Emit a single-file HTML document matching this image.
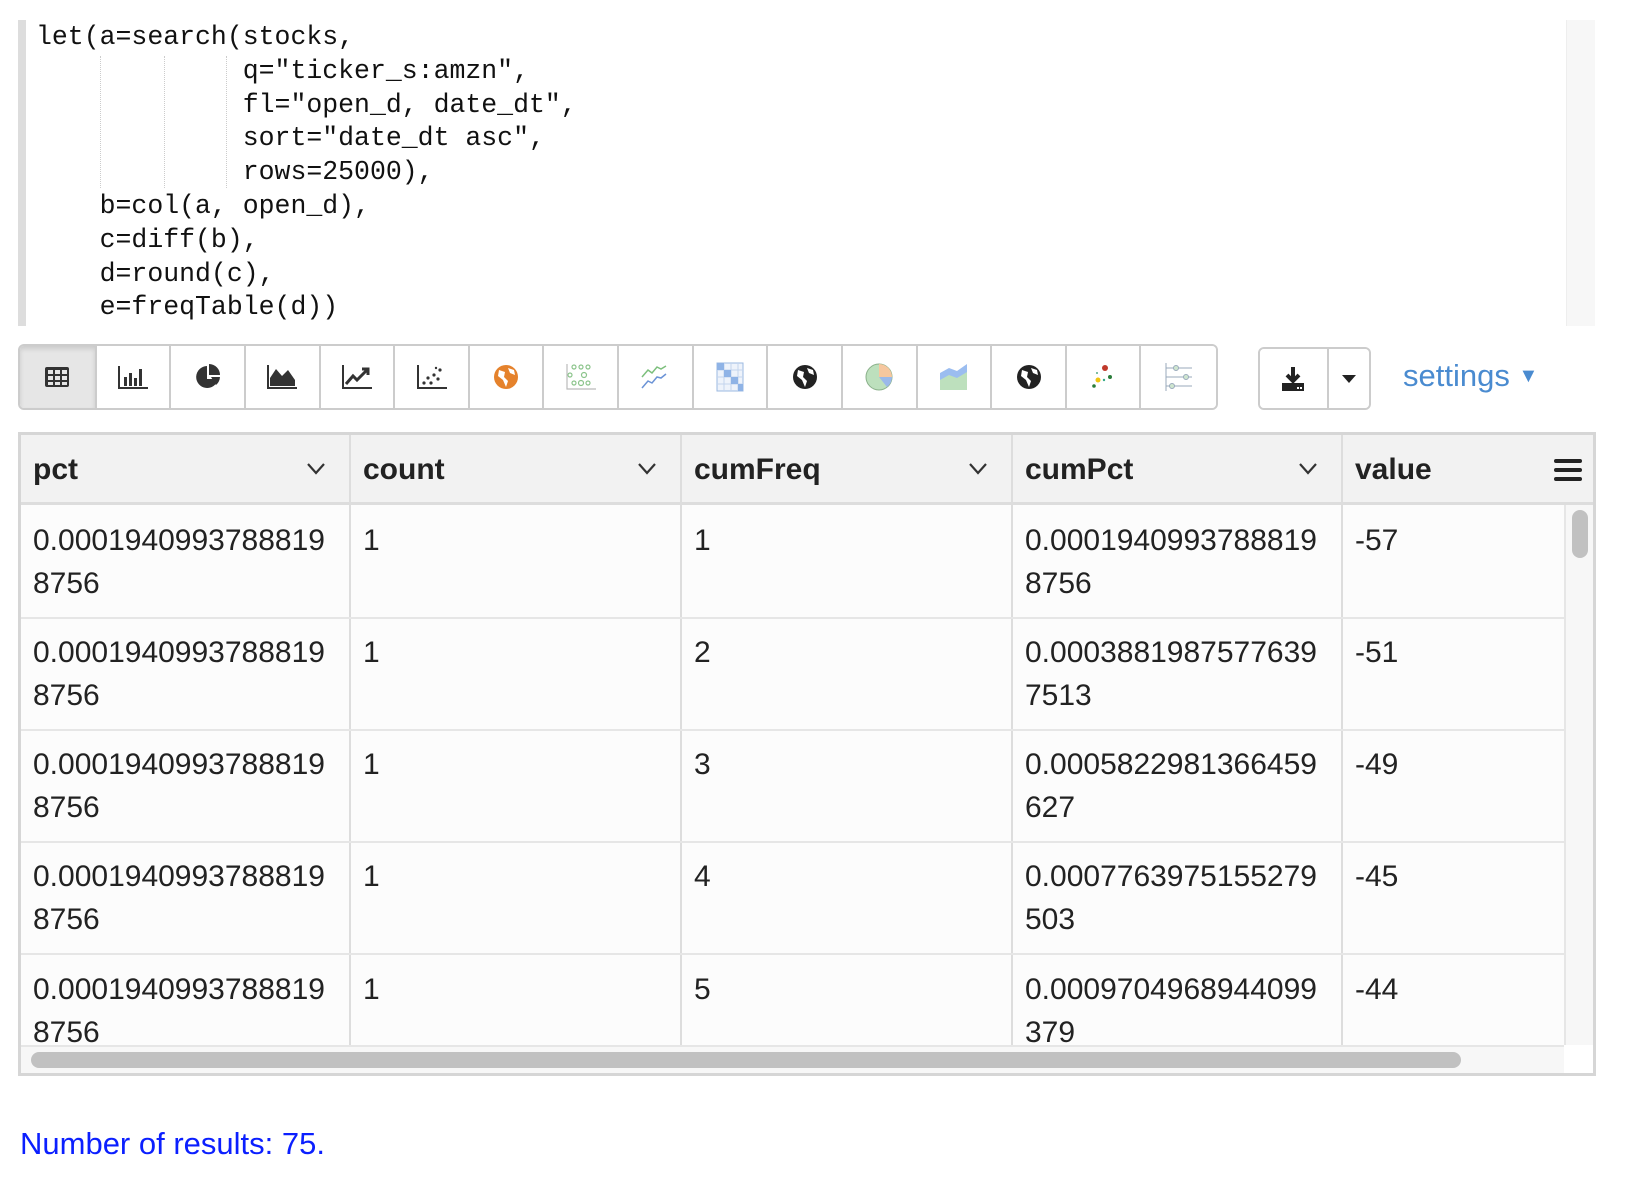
<!DOCTYPE html>
<html><head><meta charset="utf-8"><style>
*{box-sizing:border-box;margin:0;padding:0}
body{width:1626px;height:1184px;background:#fff;position:relative;overflow:hidden;font-family:"Liberation Sans",sans-serif;color:#222}
.code{position:absolute;left:18px;top:20px;width:1577px;height:306px;border-left:8px solid #ddd;background:#fff}
.code pre{position:absolute;left:10px;top:1px;font-family:"Liberation Mono","DejaVu Sans Mono",monospace;font-size:26.5px;line-height:33.8px;color:#111}
.vs{position:absolute;right:0;top:0;width:29px;height:306px;background:#f7f7f7;border-left:1px solid #eee}
.guide{position:absolute;top:36px;height:132px;border-left:1px dotted #ccc}
.tb{position:absolute;top:344px;height:66px;display:flex;border:2px solid #ccc;border-radius:6px;overflow:hidden}
.tb div{width:74.9px;height:100%;border-right:2px solid #ccc;display:flex;align-items:center;justify-content:center;background:#fff}
.tb div:last-child{border-right:none}
.tb div.act{background:#e6e6e6;width:77px;box-shadow:inset 0 3px 5px rgba(0,0,0,.12)}
.set{position:absolute;left:1403px;top:358px;font-size:31px;color:#4a8bd0}
.tbl{position:absolute;left:18px;top:432px;width:1578px;height:644px;border:3px solid #d6d6d6;overflow:hidden;background:#fcfcfc}
.hd{position:absolute;top:0;height:70px;background:#f2f2f2;border-bottom:3px solid #ddd;border-right:2px solid #ddd;font-weight:bold;font-size:30px;line-height:70px;padding-left:12px}
.hd svg.ch{position:absolute;right:24px;top:28px}
.col{position:absolute;top:70px;height:600px;border-right:2px solid #ddd}
.cell{position:absolute;font-size:30px;line-height:43px;padding-left:12px}
.rb{position:absolute;left:0;width:1544px;border-top:2px solid #e6e6e6}
</style></head><body>
<div class="code">
<div class="guide" style="left:74px"></div><div class="guide" style="left:138px"></div><div class="guide" style="left:200px"></div>
<pre>let(a=search(stocks,
             q="ticker_s:amzn",
             fl="open_d, date_dt",
             sort="date_dt asc",
             rows=25000),
    b=col(a, open_d),
    c=diff(b),
    d=round(c),
    e=freqTable(d))</pre>
<div class="vs"></div>
</div>

<div class="tb" style="left:18px;width:1200px">
<div class="act"><svg width="26" height="22" viewBox="0 0 26 22"><rect x="1" y="1" width="24" height="20" rx="2" fill="#333"/><g fill="#e6e6e6"><rect x="4" y="4" width="5" height="4"/><rect x="11" y="4" width="5" height="4"/><rect x="18" y="4" width="5" height="4"/><rect x="4" y="10" width="5" height="4"/><rect x="11" y="10" width="5" height="4"/><rect x="18" y="10" width="5" height="4"/><rect x="4" y="16" width="5" height="3"/><rect x="11" y="16" width="5" height="3"/><rect x="18" y="16" width="5" height="3"/></g></svg></div>
<div><svg width="32" height="24"><path d="M2 1V23H31" stroke="#333" stroke-width="2" fill="none"/><g fill="#333"><rect x="7" y="12" width="3" height="9"/><rect x="12" y="8" width="3" height="13"/><rect x="17" y="13" width="3" height="8"/><rect x="22" y="4" width="3" height="17"/></g></svg></div>
<div><svg width="28" height="28"><path d="M13 3A11 11 0 1 0 24 16H13Z" fill="#333"/><path d="M15 1A11 11 0 0 1 26 12H15Z" fill="#333"/><path d="M17 14H26A11 11 0 0 1 22 22Z" fill="#333"/></svg></div>
<div><svg width="32" height="26"><path d="M2 1V24H31" stroke="#333" stroke-width="2" fill="none"/><path d="M4 22L4 14L10 5L16 12L22 6L29 16V22Z" fill="#333"/></svg></div>
<div><svg width="32" height="26"><path d="M2 1V24H31" stroke="#333" stroke-width="2" fill="none"/><path d="M5 20L12 12L16 16L26 6M21 5H27V11" stroke="#333" stroke-width="3" fill="none"/></svg></div>
<div><svg width="32" height="26"><path d="M2 1V24H31" stroke="#333" stroke-width="2" fill="none"/><g fill="#333"><circle cx="8" cy="19" r="1.6"/><circle cx="12" cy="14" r="1.6"/><circle cx="15" cy="19" r="1.6"/><circle cx="18" cy="11" r="1.6"/><circle cx="22" cy="15" r="1.6"/><circle cx="24" cy="6" r="1.6"/><circle cx="20" cy="4" r="1.2"/></g></svg></div>
<div><svg width="26" height="26"><circle cx="13" cy="13" r="12" fill="#e5822c"/><path d="M6 6L12 8L11 13L15 17L13 23L10 16L5 12Z M15 4L21 6L22 11L17 9Z" fill="#fff"/></svg></div>
<div><svg width="30" height="28" fill="none" stroke="#8bc48b" stroke-width="1.2"><circle cx="8" cy="4" r="2"/><circle cx="15" cy="4" r="2"/><circle cx="22" cy="4" r="2"/><circle cx="4" cy="12" r="2"/><circle cx="18" cy="12" r="2.5"/><circle cx="8" cy="20" r="2"/><circle cx="15" cy="20" r="2.5"/><circle cx="22" cy="20" r="2"/><path d="M1 1V26H30" stroke="#bbb"/></svg></div>
<div><svg width="30" height="28" fill="none" stroke-width="1.5"><path d="M2 14L8 7L12 10L17 4L21 6L26 3" stroke="#7cbf7c"/><path d="M2 25L8 18L12 20L17 14L21 15L26 11" stroke="#6b93d6"/></svg></div>
<div><svg width="28" height="30"><rect x="1" y="1" width="26" height="28" fill="#eef3fb" stroke="#9bb8e0"/><path d="M1 8H27M1 15H27M1 22H27M8 1V29M15 1V29M22 1V29" stroke="#c4d4ee"/><rect x="1" y="1" width="7" height="7" fill="#8fb3e6"/><rect x="8" y="8" width="7" height="7" fill="#8fb3e6"/><rect x="15" y="15" width="7" height="7" fill="#8fb3e6"/><rect x="22" y="22" width="5" height="7" fill="#8fb3e6"/></svg></div>
<div><svg width="26" height="26"><circle cx="13" cy="13" r="12" fill="#222"/><path d="M6 6L12 8L11 13L15 17L13 23L10 16L5 12Z M15 4L21 6L22 11L17 9Z" fill="#fff"/></svg></div>
<div><svg width="28" height="30"><circle cx="14" cy="15" r="13" fill="#bde0bd" stroke="#8ab08a"/><path d="M14 15V2A13 13 0 0 1 27 15Z" fill="#f6c79f"/><path d="M14 15H27A13 13 0 0 1 22 25Z" fill="#9bb9ea"/></svg></div>
<div><svg width="30" height="28"><path d="M1 10L10 5L18 8L28 1V27H1Z" fill="#9bbdf0"/><path d="M1 17L10 12L18 15L28 9V27H1Z" fill="#bde0bd"/></svg></div>
<div><svg width="26" height="26"><circle cx="13" cy="13" r="12" fill="#222"/><path d="M6 6L12 8L11 13L15 17L13 23L10 16L5 12Z M15 4L21 6L22 11L17 9Z" fill="#fff"/></svg></div>
<div><svg width="26" height="26"><circle cx="15" cy="4" r="3" fill="#c0392b"/><circle cx="7" cy="9" r="1" fill="#5a8"/><circle cx="8" cy="16" r="2.5" fill="#f1c40f"/><circle cx="14" cy="16" r="1.2" fill="#3a8"/><circle cx="20" cy="13" r="2" fill="#2a7d3a"/><circle cx="4" cy="22" r="1.8" fill="#2a7d3a"/></svg></div>
<div><svg width="30" height="30" stroke="#9ab" fill="#cfe6cf"><path d="M2 1V29M2 6H28M2 15H28M2 24H28" fill="none"/><circle cx="12" cy="6" r="2.5"/><circle cx="22" cy="15" r="2.5"/><circle cx="8" cy="24" r="2.5"/></svg></div>
</div>

<div class="tb" style="left:1258px;top:347px;height:63px;width:113px">
<div style="width:71px"><svg width="26" height="26"><path d="M13 1V14M7 9L13 15L19 9" stroke="#222" stroke-width="4" fill="none"/><path d="M2 17H24V25H2Z" fill="#222"/><rect x="17" y="21" width="2" height="2" fill="#fff"/><rect x="20" y="21" width="2" height="2" fill="#fff"/></svg></div>
<div style="width:42px"><svg width="14" height="8"><path d="M0 0H14L7 8Z" fill="#222"/></svg></div>
</div>
<div class="set">settings <span style="font-size:20px;position:relative;top:-4px">&#9660;</span></div>

<div class="tbl">
<div class="hd" style="left:0;width:330px">pct<svg class="ch" width="18" height="12"><path d="M1 1L9 10L17 1" stroke="#333" stroke-width="2.2" fill="none"/></svg></div>
<div class="hd" style="left:330px;width:331px">count<svg class="ch" width="18" height="12"><path d="M1 1L9 10L17 1" stroke="#333" stroke-width="2.2" fill="none"/></svg></div>
<div class="hd" style="left:661px;width:331px">cumFreq<svg class="ch" width="18" height="12"><path d="M1 1L9 10L17 1" stroke="#333" stroke-width="2.2" fill="none"/></svg></div>
<div class="hd" style="left:992px;width:330px">cumPct<svg class="ch" width="18" height="12"><path d="M1 1L9 10L17 1" stroke="#333" stroke-width="2.2" fill="none"/></svg></div>
<div class="hd" style="left:1322px;width:196px">value</div>
<div class="hd" style="left:1516px;width:62px;border-right:none;padding-left:0;text-align:center"><svg width="28" height="24" style="margin-top:23px"><rect y="1" width="28" height="4" rx="2" fill="#222"/><rect y="10" width="28" height="4" rx="2" fill="#222"/><rect y="19" width="28" height="4" rx="2" fill="#222"/></svg></div>
<div class="col" style="left:0;width:330px"></div>
<div class="col" style="left:330px;width:331px"></div>
<div class="col" style="left:661px;width:331px"></div>
<div class="col" style="left:992px;width:330px"></div>
<div class="rb" style="top:182px"></div><div class="rb" style="top:294px"></div><div class="rb" style="top:406px"></div><div class="rb" style="top:518px"></div>

<div class="cell" style="left:0;top:84px">0.0001940993788819<br>8756</div><div class="cell" style="left:330px;top:84px">1</div><div class="cell" style="left:661px;top:84px">1</div><div class="cell" style="left:992px;top:84px">0.0001940993788819<br>8756</div><div class="cell" style="left:1322px;top:84px">-57</div>
<div class="cell" style="left:0;top:196px">0.0001940993788819<br>8756</div><div class="cell" style="left:330px;top:196px">1</div><div class="cell" style="left:661px;top:196px">2</div><div class="cell" style="left:992px;top:196px">0.0003881987577639<br>7513</div><div class="cell" style="left:1322px;top:196px">-51</div>
<div class="cell" style="left:0;top:308px">0.0001940993788819<br>8756</div><div class="cell" style="left:330px;top:308px">1</div><div class="cell" style="left:661px;top:308px">3</div><div class="cell" style="left:992px;top:308px">0.0005822981366459<br>627</div><div class="cell" style="left:1322px;top:308px">-49</div>
<div class="cell" style="left:0;top:420px">0.0001940993788819<br>8756</div><div class="cell" style="left:330px;top:420px">1</div><div class="cell" style="left:661px;top:420px">4</div><div class="cell" style="left:992px;top:420px">0.0007763975155279<br>503</div><div class="cell" style="left:1322px;top:420px">-45</div>
<div class="cell" style="left:0;top:533px">0.0001940993788819<br>8756</div><div class="cell" style="left:330px;top:533px">1</div><div class="cell" style="left:661px;top:533px">5</div><div class="cell" style="left:992px;top:533px">0.0009704968944099<br>379</div><div class="cell" style="left:1322px;top:533px">-44</div>

<div style="position:absolute;left:1543px;top:70px;width:32px;height:540px;background:#f7f7f7;border-left:2px solid #e6e6e6"></div>
<div style="position:absolute;left:1551px;top:75px;width:16px;height:48px;border-radius:8px;background:#c1c1c1"></div>
<div style="position:absolute;left:0;top:610px;width:1543px;height:28px;background:#f7f7f7;border-top:2px solid #e6e6e6"></div>
<div style="position:absolute;left:10px;top:617px;width:1430px;height:16px;border-radius:8px;background:#c1c1c1"></div>
<div style="position:absolute;left:1543px;top:610px;width:35px;height:30px;background:#fff"></div>
</div>

<div style="position:absolute;left:20px;top:1126px;font-size:31px;color:#0b1fff">Number of results: 75.</div>
</body></html>
